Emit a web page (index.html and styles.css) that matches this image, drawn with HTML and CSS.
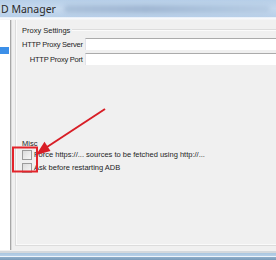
FILE: index.html
```html
<!DOCTYPE html>
<html>
<head>
<meta charset="utf-8">
<link rel="stylesheet" href="styles.css">
</head>
<body>
<div class="window">
  <div class="titlebar">
    <span class="title">D Manager</span>
    <span class="blur"></span>
  </div>
  <div class="titlesep"></div>
  <div class="main">
    <div class="sidebar">
      <div class="side-item"></div>
    </div>
    <div class="content">
      <div class="panel">
        <div class="group">
          <div class="group-head"><span class="group-title">Proxy Settings</span><span class="group-line"></span></div>
          <div class="form">
            <label class="lbl">HTTP Proxy Server</label>
            <div class="input"></div>
            <label class="lbl">HTTP Proxy Port</label>
            <div class="input"></div>
          </div>
        </div>
        <div class="group misc">
          <div class="group-head"><span class="group-title">Misc</span></div>
          <div class="check"><span class="box"></span><span class="ctext">Force https://... sources to be fetched using http://...</span></div>
          <div class="check"><span class="box"></span><span class="ctext">Ask before restarting ADB</span></div>
        </div>
      </div>
    </div>
  </div>
  <div class="bottom"></div>
  <svg class="annot" width="276" height="260" viewBox="0 0 276 260">
    <rect x="13" y="147.5" width="24" height="24" fill="none" stroke="#e3242b" stroke-width="2"/>
    <line x1="105" y1="109" x2="47" y2="147" stroke="#d81e26" stroke-width="2"/>
    <polygon points="36,155 44.5,141.8 50.5,151" fill="#d81e26"/>
  </svg>
</div>
</body>
</html>
```

FILE: styles.css
```css
html, body {
  margin: 0;
  padding: 0;
  background: #f0f0f0;
}
.window {
  position: relative;
  width: 276px;
  height: 260px;
  overflow: hidden;
  font-family: "Liberation Sans", Arial, sans-serif;
  font-size: 7.5px;
  color: #1e1e1e;
}
.titlebar {
  height: 17px;
  display: flex;
  align-items: center;
  background: linear-gradient(to bottom, #b7cfe8 0%, #c6d9ee 50%, #b9d0e9 100%);
}
.title {
  font-family: "Noto Sans", sans-serif;
  font-size: 10.5px;
  color: #2a2a2a;
  padding-left: 1px;
  white-space: nowrap;
}
.blur {
  flex: 1;
  height: 8px;
  margin: 0 6px 0 8px;
  border-radius: 4px;
  background: linear-gradient(to right, #a9c0da, #9fb6d2 40%, #aac2dc 70%, #b5cbe3);
  filter: blur(2px);
}
.titlesep {
  height: 3px;
  background: linear-gradient(to bottom, #e4edf7, #fafbfd 60%, #f0f0f0);
}
.main {
  display: flex;
  height: 230px;
}
.sidebar {
  width: 10px;
  background: #fff;
  border-right: 1px solid #a7a7a7;
  box-shadow: 1px 0 0 #d9d9d9;
  padding-top: 27px;
  box-sizing: content-box;
}
.side-item {
  width: 9px;
  height: 7px;
  background: #3c8fe8;
}
.content {
  flex: 1;
  padding-left: 4px;
  display: flex;
  flex-direction: column;
}
.panel {
  flex: 1;
  margin-bottom: 4px;
  border-left: 1px solid #dcdcdc;
  border-bottom: 1px solid #dcdcdc;
  box-shadow: inset 1px -1px 0 #fafafa;
  padding: 5px 0 0 6px;
}
.group-head {
  display: flex;
  align-items: center;
  height: 10px;
}
.group-title {
  white-space: nowrap;
  padding-right: 2px;
}
.group-line {
  flex: 1;
  height: 0;
  border-top: 1px solid #dcdcdc;
  border-bottom: 1px solid #fbfbfb;
}
.form {
  display: grid;
  grid-template-columns: auto 1fr;
  grid-auto-rows: 12px;
  row-gap: 3px;
  column-gap: 2px;
  align-items: center;
  margin-top: 3px;
}
.lbl {
  text-align: right;
  white-space: nowrap;
  letter-spacing: -0.25px;
}
.input {
  height: 11px;
  background: #fff;
  border-top: 1px solid #ababab;
  border-left: 1px solid #e2e3ea;
}
.misc {
  margin-top: 73px;
}
.check {
  display: flex;
  align-items: center;
  height: 13px;
}
.box {
  width: 8px;
  height: 8px;
  border: 1px solid #9c9c9c;
  background: linear-gradient(135deg, #dcdcdc, #f8f8f8);
  margin-right: 2px;
  flex: none;
}
.ctext {
  white-space: nowrap;
}
.bottom {
  height: 10px;
  background: linear-gradient(to bottom, #f0f0f0 0, #f0f0f0 1px, #d4d8dc 1px, #d4d8dc 3px, #a9c6e0 3px, #b7d0e8 6px, #eef4fa 6px, #eef4fa 7px, #8eaecb 7px, #7b9bb8 10px);
}
.annot {
  position: absolute;
  left: 0;
  top: 0;
}
```
